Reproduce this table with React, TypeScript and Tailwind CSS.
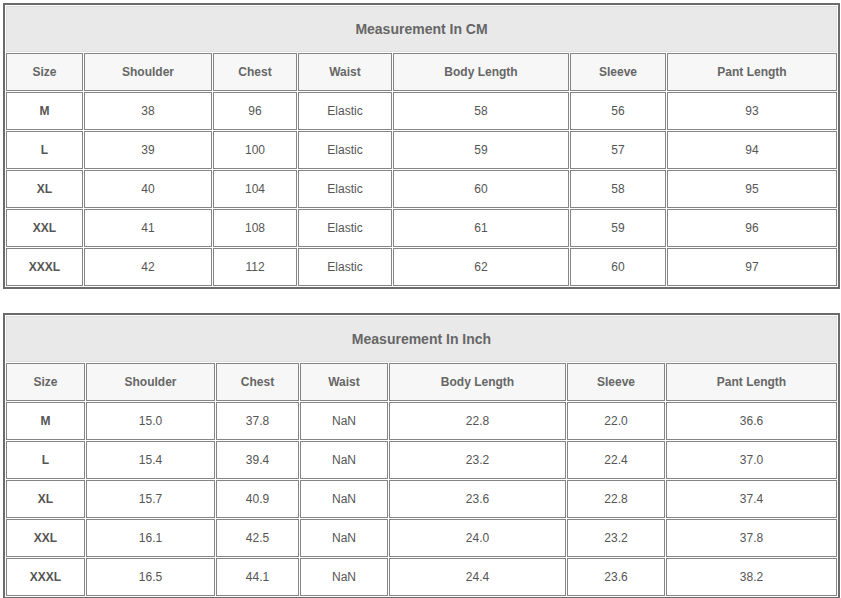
const headers = ["Size", "Shoulder", "Chest", "Waist", "Body Length", "Sleeve", "Pant Length"];

const cmRows = [
  ["M", "38", "96", "Elastic", "58", "56", "93"],
  ["L", "39", "100", "Elastic", "59", "57", "94"],
  ["XL", "40", "104", "Elastic", "60", "58", "95"],
  ["XXL", "41", "108", "Elastic", "61", "59", "96"],
  ["XXXL", "42", "112", "Elastic", "62", "60", "97"],
];

const inchRows = [
  ["M", "15.0", "37.8", "NaN", "22.8", "22.0", "36.6"],
  ["L", "15.4", "39.4", "NaN", "23.2", "22.4", "37.0"],
  ["XL", "15.7", "40.9", "NaN", "23.6", "22.8", "37.4"],
  ["XXL", "16.1", "42.5", "NaN", "24.0", "23.2", "37.8"],
  ["XXXL", "16.5", "44.1", "NaN", "24.4", "23.6", "38.2"],
];

const SizeTable = ({
  title,
  rows,
  cols,
}: {
  title: string;
  rows: string[][];
  cols: string;
}) => {
  return (
    <div className="w-[837px] border-2 border-[#6b6b6b] p-px bg-white">
      <div className={`grid gap-px ${cols}`}>
        <div className="col-span-7 h-[46px] flex items-center justify-center bg-[#e9e9e9] border border-[#dedede] text-[14px] font-bold text-[#666]">
          {title}
        </div>
        {headers.map((h) => (
          <div
            key={h}
            className="h-[38px] flex items-center justify-center bg-[#f7f7f7] border border-[#858585] text-[12px] font-bold text-[#666]"
          >
            {h}
          </div>
        ))}
        {rows.map((row) =>
          row.map((cell, i) => (
            <div
              key={row[0] + i}
              className={`h-[38px] flex items-center justify-center bg-white border border-[#858585] text-[12px] text-[#555] ${
                i === 0 ? "font-bold" : ""
              }`}
            >
              {cell}
            </div>
          ))
        )}
      </div>
    </div>
  );
};

export default function App() {
  return (
    <div className="w-[841px] h-[598px] overflow-hidden bg-white pl-[3px] pt-[3px] font-['Liberation_Sans',Arial,sans-serif]">
      <SizeTable
        title="Measurement In CM"
        rows={cmRows}
        cols="grid-cols-[77px_128px_84px_94px_176px_96px_170px]"
      />
      <div className="mt-[24px]">
        <SizeTable
          title="Measurement In Inch"
          rows={inchRows}
          cols="grid-cols-[79px_129px_83px_88px_177px_98px_171px]"
        />
      </div>
    </div>
  );
}
